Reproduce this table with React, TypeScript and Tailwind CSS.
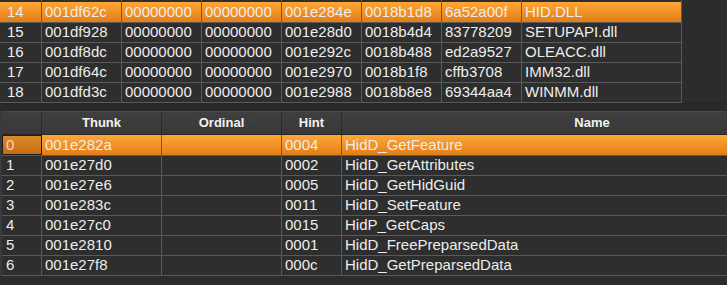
import React from "react";

type TopRow = { idx: string; cells: string[]; name: string };

const topRows: TopRow[] = [
  { idx: "14", cells: ["001df62c", "00000000", "00000000", "001e284e", "0018b1d8", "6a52a00f"], name: "HID.DLL" },
  { idx: "15", cells: ["001df928", "00000000", "00000000", "001e28d0", "0018b4d4", "83778209"], name: "SETUPAPI.dll" },
  { idx: "16", cells: ["001df8dc", "00000000", "00000000", "001e292c", "0018b488", "ed2a9527"], name: "OLEACC.dll" },
  { idx: "17", cells: ["001df64c", "00000000", "00000000", "001e2970", "0018b1f8", "cffb3708"], name: "IMM32.dll" },
  { idx: "18", cells: ["001dfd3c", "00000000", "00000000", "001e2988", "0018b8e8", "69344aa4"], name: "WINMM.dll" },
];

const imports = [
  { thunk: "001e282a", hint: "0004", name: "HidD_GetFeature" },
  { thunk: "001e27d0", hint: "0002", name: "HidD_GetAttributes" },
  { thunk: "001e27e6", hint: "0005", name: "HidD_GetHidGuid" },
  { thunk: "001e283c", hint: "0011", name: "HidD_SetFeature" },
  { thunk: "001e27c0", hint: "0015", name: "HidP_GetCaps" },
  { thunk: "001e2810", hint: "0001", name: "HidD_FreePreparsedData" },
  { thunk: "001e27f8", hint: "000c", name: "HidD_GetPreparsedData" },
];

const orange = "bg-gradient-to-b from-[#ffa736] to-[#e37d15]";
const line = "border-[#5a5a5a]";

const App: React.FC = () => {
  return (
    <div className="w-[727px] h-[285px] overflow-hidden bg-[#2c2c2c] font-['Liberation_Sans',Arial,sans-serif] text-[15px] text-[#ededed]">
      {/* modules table */}
      <div className="w-[682px] bg-[#2e2e2e]">
        <div className="flex h-[2px]">
          <div className={`w-[42px] border-r ${line}`} />
          {[0, 1, 2, 3, 4, 5].map((i) => (
            <div key={i} className={`w-[80px] border-r ${line}`} />
          ))}
          <div className={`w-[160px] border-r ${line}`} />
        </div>
        {topRows.map((r, i) => {
          const sel = i === 0;
          return (
            <div
              key={r.idx}
              className={`flex border-b ${line} ${i === 0 ? "h-[21px]" : "h-[20px]"} ${sel ? orange : ""}`}
            >
              <div className={`w-[42px] pl-[7px] flex items-center border-r ${line}`}>{r.idx}</div>
              {r.cells.map((c, j) => (
                <div key={j} className={`w-[80px] pl-[3px] flex items-center border-r ${line}`}>
                  {c}
                </div>
              ))}
              <div className={`w-[160px] pl-[3px] flex items-center border-r ${line}`}>{r.name}</div>
            </div>
          );
        })}
      </div>

      <div className="h-[8px] border-t border-[#262626] bg-[#2a2a2a]" />

      {/* imports table */}
      <div className="w-[843px] border-l-2 border-[#3a3a3a] bg-[#2e2e2e]">
        <div className="flex h-[24px] border-t border-b border-t-[#4a4a4a] border-b-[#262626] bg-gradient-to-b from-[#3f3f3f] to-[#383838] text-[13px] font-bold text-[#f2f2f2]">
          <div className="w-[40px] border-r border-[#2a2a2a]" />
          <div className="w-[120px] flex items-center justify-center border-r border-[#2a2a2a]">Thunk</div>
          <div className="w-[120px] flex items-center justify-center border-r border-[#2a2a2a]">Ordinal</div>
          <div className="w-[60px] flex items-center justify-center border-r border-[#2a2a2a]">Hint</div>
          <div className="w-[500px] flex items-center justify-center">Name</div>
        </div>
        {imports.map((r, i) => {
          const sel = i === 0;
          return (
            <div
              key={r.thunk}
              className={`flex border-b ${line} ${i === 0 ? "h-[21px]" : "h-[20px]"} ${sel ? orange : ""}`}
            >
              <div
                className={`w-[40px] pl-[4px] flex items-center border-r ${line} ${
                  sel ? "bg-gradient-to-b from-[#dc8a2c] to-[#c56c10] outline outline-1 -outline-offset-1 outline-[#1c1c1c] text-[#f6d9b0]" : ""
                }`}
              >
                {i}
              </div>
              <div className={`w-[120px] pl-[3px] flex items-center border-r ${line}`}>{r.thunk}</div>
              <div className={`w-[120px] border-r ${line}`} />
              <div className={`w-[60px] pl-[3px] flex items-center border-r ${line}`}>{r.hint}</div>
              <div className="w-[500px] pl-[3px] flex items-center">{r.name}</div>
            </div>
          );
        })}
      </div>
    </div>
  );
};

export default App;
